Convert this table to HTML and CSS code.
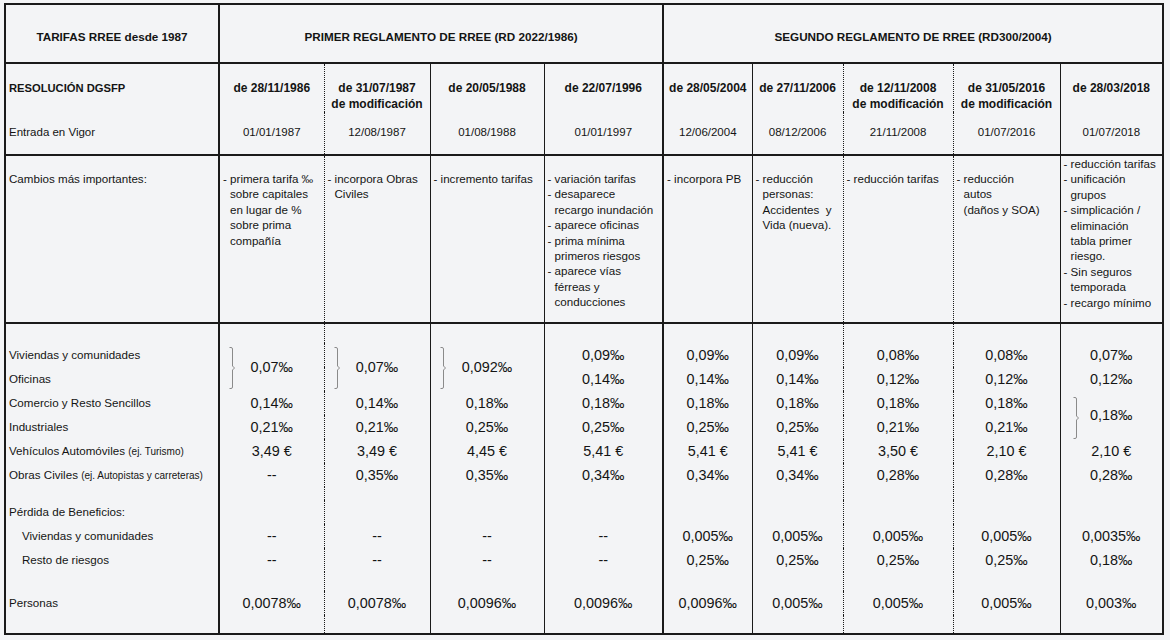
FILE: index.html
```html
<!DOCTYPE html>
<html lang="es">
<head>
<meta charset="utf-8">
<title>Tarifas RREE desde 1987</title>
<link rel="stylesheet" href="styles.css">
</head>
<body>
<table class="tarifas">
  <colgroup>
    <col class="k1">
    <col class="k2 b-thick">
    <col class="k3 b-dot">
    <col class="k4 b-thin">
    <col class="k5 b-thin">
    <col class="k6 b-thick">
    <col class="k7 b-thin">
    <col class="k8 b-dot">
    <col class="k9 b-dot">
    <col class="k10 b-thin">
  </colgroup>
  <tr class="r-title sep">
    <th>TARIFAS RREE desde 1987</th>
    <th colspan="4">PRIMER REGLAMENTO DE RREE (RD 2022/1986)</th>
    <th colspan="5">SEGUNDO REGLAMENTO DE RREE (RD300/2004)</th>
  </tr>
  <tr class="r-res">
    <th class="lbl">RESOLUCIÓN DGSFP</th>
    <th>de 28/11/1986</th>
    <th>de 31/07/1987<br>de modificación</th>
    <th>de 20/05/1988</th>
    <th>de 22/07/1996</th>
    <th>de 28/05/2004</th>
    <th>de 27/11/2006</th>
    <th>de 12/11/2008<br>de modificación</th>
    <th>de 31/05/2016<br>de modificación</th>
    <th>de 28/03/2018</th>
  </tr>
  <tr class="r-vig sep">
    <td class="lbl">Entrada en Vigor</td>
    <td>01/01/1987</td>
    <td>12/08/1987</td>
    <td>01/08/1988</td>
    <td>01/01/1997</td>
    <td>12/06/2004</td>
    <td>08/12/2006</td>
    <td>21/11/2008</td>
    <td>01/07/2016</td>
    <td>01/07/2018</td>
  </tr>
  <tr class="r-chg sep">
    <td class="lbl">Cambios más importantes:</td>
    <td><div class="it">- primera tarifa ‰<br>sobre capitales<br>en lugar de %<br>sobre prima<br>compañía</div></td>
    <td><div class="it">- incorpora Obras<br>Civiles</div></td>
    <td><div class="it">- incremento tarifas</div></td>
    <td>
      <div class="it">- variación tarifas</div>
      <div class="it">- desaparece<br>recargo inundación</div>
      <div class="it">- aparece oficinas</div>
      <div class="it">- prima mínima<br>primeros riesgos</div>
      <div class="it">- aparece vías<br>férreas y<br>conducciones</div>
    </td>
    <td><div class="it">- incorpora PB</div></td>
    <td><div class="it">- reducción<br>personas:<br>Accidentes&nbsp; y<br>Vida (nueva).</div></td>
    <td><div class="it">- reducción tarifas</div></td>
    <td><div class="it">- reducción<br>autos<br>(daños y SOA)</div></td>
    <td class="tight">
      <div class="it">- reducción tarifas</div>
      <div class="it">- unificación<br>grupos</div>
      <div class="it">- simplicación /<br>eliminación<br>tabla primer<br>riesgo.</div>
      <div class="it">- Sin seguros<br>temporada</div>
      <div class="it">- recargo mínimo</div>
    </td>
  </tr>
  <tr class="gap g-top"><td></td><td></td><td></td><td></td><td></td><td></td><td></td><td></td><td></td><td></td></tr>
  <tr class="d">
    <td class="lbl">Viviendas y comunidades</td>
    <td rowspan="2" class="brace"><svg class="br" width="7" height="42" viewBox="0 0 7 42"><path d="M0.5 0.5 H2 Q3.5 0.5 3.5 2 V19 L5.5 21 L3.5 23 V40 Q3.5 41.5 2 41.5 H0.5"/></svg>0,07‰</td>
    <td rowspan="2" class="brace"><svg class="br" width="7" height="42" viewBox="0 0 7 42"><path d="M0.5 0.5 H2 Q3.5 0.5 3.5 2 V19 L5.5 21 L3.5 23 V40 Q3.5 41.5 2 41.5 H0.5"/></svg>0,07‰</td>
    <td rowspan="2" class="brace"><svg class="br" width="7" height="42" viewBox="0 0 7 42"><path d="M0.5 0.5 H2 Q3.5 0.5 3.5 2 V19 L5.5 21 L3.5 23 V40 Q3.5 41.5 2 41.5 H0.5"/></svg>0,092‰</td>
    <td>0,09‰</td>
    <td>0,09‰</td>
    <td>0,09‰</td>
    <td>0,08‰</td>
    <td>0,08‰</td>
    <td>0,07‰</td>
  </tr>
  <tr class="d">
    <td class="lbl">Oficinas</td>
    <td>0,14‰</td>
    <td>0,14‰</td>
    <td>0,14‰</td>
    <td>0,12‰</td>
    <td>0,12‰</td>
    <td>0,12‰</td>
  </tr>
  <tr class="d">
    <td class="lbl">Comercio y Resto Sencillos</td>
    <td>0,14‰</td>
    <td>0,14‰</td>
    <td>0,18‰</td>
    <td>0,18‰</td>
    <td>0,18‰</td>
    <td>0,18‰</td>
    <td>0,18‰</td>
    <td>0,18‰</td>
    <td rowspan="2" class="brace brace-r"><svg class="br" width="7" height="42" viewBox="0 0 7 42"><path d="M0.5 0.5 H2 Q3.5 0.5 3.5 2 V19 L5.5 21 L3.5 23 V40 Q3.5 41.5 2 41.5 H0.5"/></svg>0,18‰</td>
  </tr>
  <tr class="d">
    <td class="lbl">Industriales</td>
    <td>0,21‰</td>
    <td>0,21‰</td>
    <td>0,25‰</td>
    <td>0,25‰</td>
    <td>0,25‰</td>
    <td>0,25‰</td>
    <td>0,21‰</td>
    <td>0,21‰</td>
  </tr>
  <tr class="d">
    <td class="lbl">Vehículos Automóviles <span class="small">(ej. Turismo)</span></td>
    <td>3,49 €</td>
    <td>3,49 €</td>
    <td>4,45 €</td>
    <td>5,41 €</td>
    <td>5,41 €</td>
    <td>5,41 €</td>
    <td>3,50 €</td>
    <td>2,10 €</td>
    <td>2,10 €</td>
  </tr>
  <tr class="d">
    <td class="lbl">Obras Civiles <span class="small">(ej. Autopistas y carreteras)</span></td>
    <td>--</td>
    <td>0,35‰</td>
    <td>0,35‰</td>
    <td>0,34‰</td>
    <td>0,34‰</td>
    <td>0,34‰</td>
    <td>0,28‰</td>
    <td>0,28‰</td>
    <td>0,28‰</td>
  </tr>
  <tr class="gap g-mid"><td></td><td></td><td></td><td></td><td></td><td></td><td></td><td></td><td></td><td></td></tr>
  <tr class="d">
    <td class="lbl">Pérdida de Beneficios:</td>
    <td></td><td></td><td></td><td></td><td></td><td></td><td></td><td></td><td></td>
  </tr>
  <tr class="d">
    <td class="lbl ind">Viviendas y comunidades</td>
    <td>--</td>
    <td>--</td>
    <td>--</td>
    <td>--</td>
    <td>0,005‰</td>
    <td>0,005‰</td>
    <td>0,005‰</td>
    <td>0,005‰</td>
    <td>0,0035‰</td>
  </tr>
  <tr class="d">
    <td class="lbl ind">Resto de riesgos</td>
    <td>--</td>
    <td>--</td>
    <td>--</td>
    <td>--</td>
    <td>0,25‰</td>
    <td>0,25‰</td>
    <td>0,25‰</td>
    <td>0,25‰</td>
    <td>0,18‰</td>
  </tr>
  <tr class="gap g-low"><td></td><td></td><td></td><td></td><td></td><td></td><td></td><td></td><td></td><td></td></tr>
  <tr class="d">
    <td class="lbl">Personas</td>
    <td>0,0078‰</td>
    <td>0,0078‰</td>
    <td>0,0096‰</td>
    <td>0,0096‰</td>
    <td>0,0096‰</td>
    <td>0,005‰</td>
    <td>0,005‰</td>
    <td>0,005‰</td>
    <td>0,003‰</td>
  </tr>
  <tr class="gap g-end"><td></td><td></td><td></td><td></td><td></td><td></td><td></td><td></td><td></td><td></td></tr>
</table>
</body>
</html>
```
FILE: styles.css
```css
html, body {
  background: #f3f4f6;
}
body {
  margin: 3px 0 0 4px;
  font-family: "Liberation Sans", Arial, sans-serif;
  color: #141414;
}
.tarifas {
  border-collapse: collapse;
  table-layout: fixed;
  width: 1158px;
  border: 2px solid #1a1a1a;
  font-size: 11.6px;
}
.tarifas th,
.tarifas td {
  padding: 0;
}
.k1 { width: 214px; }
.k2 { width: 105px; }
.k3 { width: 106px; }
.k4 { width: 114px; }
.k5 { width: 119px; }
.k6 { width: 89px; }
.k7 { width: 91px; }
.k8 { width: 110px; }
.k9 { width: 107px; }
.k10 { width: 103px; }

.b-thick { border-left: 2px solid #1a1a1a; }
.b-thin { border-left: 1px solid #1a1a1a; }
.b-dot { border-left: 1px dotted #1a1a1a; }

.sep { border-bottom: 2px solid #1a1a1a; }

/* title row */
.r-title th {
  height: 52px;
  padding-top: 5px;
  font-size: 11.7px;
  vertical-align: middle;
  white-space: nowrap;
}

/* resolution row */
.r-res th {
  vertical-align: top;
  padding-top: 16px;
  font-size: 12px;
  line-height: 16px;
  white-space: nowrap;
}
.r-res th.lbl {
  font-size: 11.2px;
}
.r-vig td {
  vertical-align: top;
  padding-top: 12px;
  padding-bottom: 14px;
  line-height: 16px;
  font-size: 11.5px;
  text-align: center;
}

.tarifas .lbl {
  text-align: left;
  padding-left: 3px;
}

/* changes row */
.r-chg td {
  height: 151px;
  vertical-align: top;
  padding: 15px 0 0 3px;
  line-height: 15.4px;
  font-size: 11.6px;
}
.r-chg td.tight {
  padding-top: 0;
}
.it {
  padding-left: 7px;
  text-indent: -7px;
}

/* data rows */
.d td {
  height: 24px;
  text-align: center;
  vertical-align: middle;
  font-size: 14.4px;
  line-height: 16px;
  white-space: nowrap;
}
.d td.lbl {
  font-size: 11.6px;
}
.d td.ind {
  padding-left: 16px;
}
.small {
  font-size: 10px;
}

.gap td { padding: 0; }
.g-top td { height: 19px; }
.g-mid td { height: 13px; }
.g-low td { height: 19px; }
.g-end td { height: 18px; }

/* merged values with a brace */
.brace {
  position: relative;
}
.br {
  position: absolute;
  left: 9px;
  top: 4px;
}
.brace-r .br {
  left: 12px;
  top: 6px;
}
.br path {
  fill: none;
  stroke: #8a8a8a;
  stroke-width: 1;
}
```
